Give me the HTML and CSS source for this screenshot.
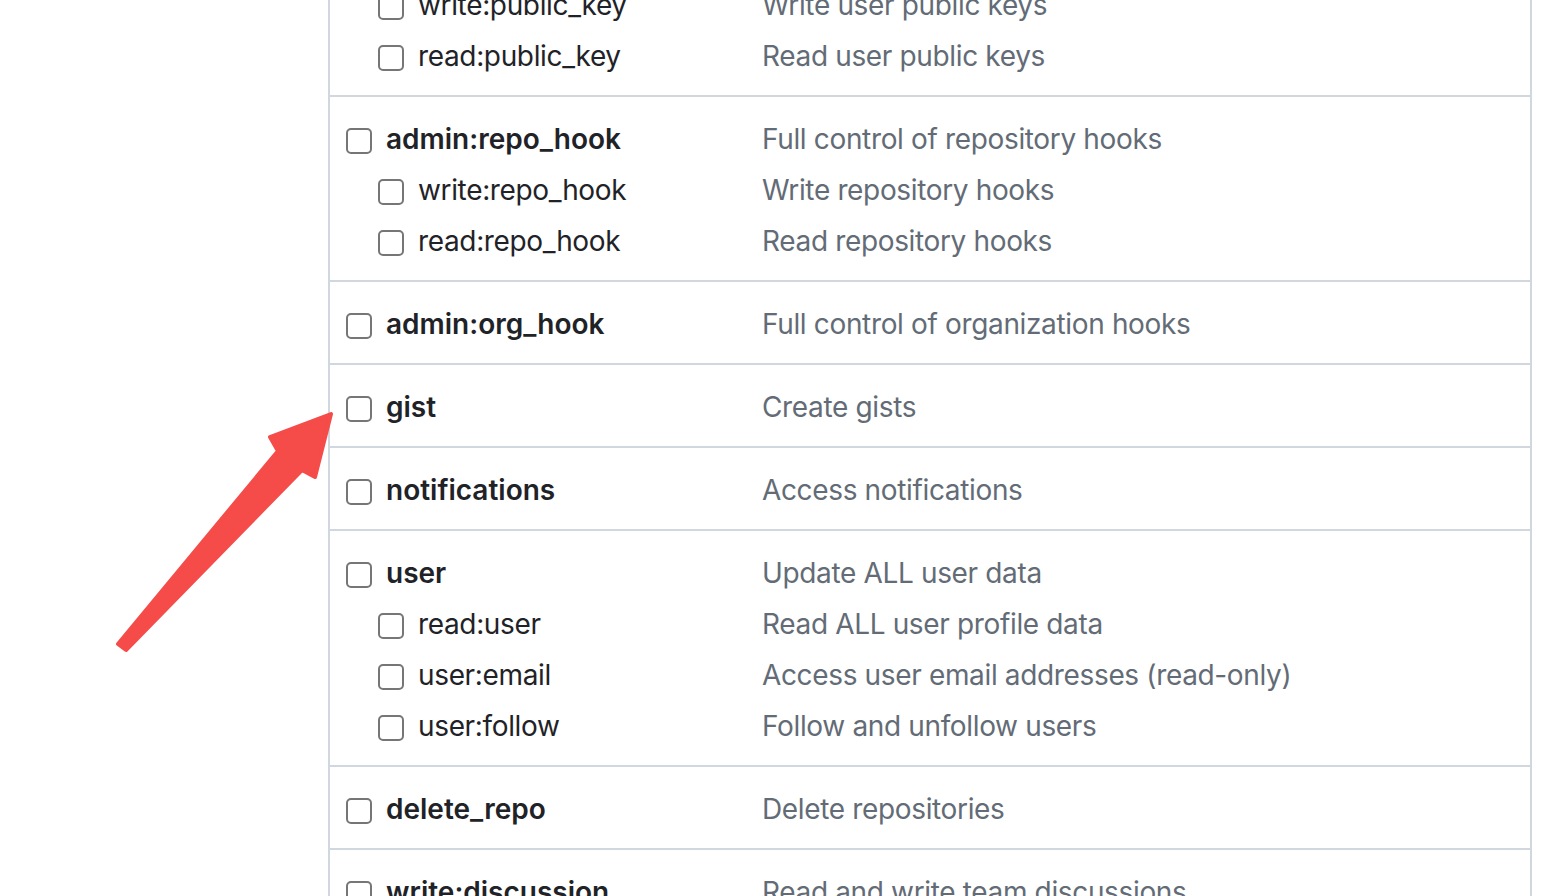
FILE: index.html
```html
<!DOCTYPE html>
<html>
<head>
<meta charset="utf-8">
<link rel="stylesheet" href="styles.css">
</head>
<body>
<div class="page">
  <div class="scopes">
    <div class="group cut">
      <div class="row sub"><span class="label"><span class="cb"></span>write:public_key</span><span class="desc">Write user public keys</span></div>
      <div class="row sub"><span class="label"><span class="cb"></span>read:public_key</span><span class="desc">Read user public keys</span></div>
    </div>
    <div class="group">
      <div class="row main"><span class="label"><span class="cb"></span>admin:repo_hook</span><span class="desc">Full control of repository hooks</span></div>
      <div class="row sub"><span class="label"><span class="cb"></span>write:repo_hook</span><span class="desc">Write repository hooks</span></div>
      <div class="row sub"><span class="label"><span class="cb"></span>read:repo_hook</span><span class="desc">Read repository hooks</span></div>
    </div>
    <div class="group">
      <div class="row main"><span class="label"><span class="cb"></span>admin:org_hook</span><span class="desc">Full control of organization hooks</span></div>
    </div>
    <div class="group">
      <div class="row main"><span class="label"><span class="cb"></span>gist</span><span class="desc">Create gists</span></div>
    </div>
    <div class="group">
      <div class="row main"><span class="label"><span class="cb"></span>notifications</span><span class="desc">Access notifications</span></div>
    </div>
    <div class="group">
      <div class="row main"><span class="label"><span class="cb"></span>user</span><span class="desc">Update ALL user data</span></div>
      <div class="row sub"><span class="label"><span class="cb"></span>read:user</span><span class="desc">Read ALL user profile data</span></div>
      <div class="row sub"><span class="label"><span class="cb"></span>user:email</span><span class="desc">Access user email addresses (read-only)</span></div>
      <div class="row sub"><span class="label"><span class="cb"></span>user:follow</span><span class="desc">Follow and unfollow users</span></div>
    </div>
    <div class="group">
      <div class="row main"><span class="label"><span class="cb"></span>delete_repo</span><span class="desc">Delete repositories</span></div>
    </div>
    <div class="group">
      <div class="row main"><span class="label"><span class="cb"></span>write:discussion</span><span class="desc">Read and write team discussions</span></div>
      <div class="row sub"><span class="label"><span class="cb"></span>read:discussion</span><span class="desc">Read team discussions</span></div>
    </div>
  </div>
  <svg class="arrow" width="1544" height="896" viewBox="0 0 1544 896">
    <polygon points="118,644 278,451 270,437 331,414 315,477 302,470 126,650" fill="#f54b49" stroke="#f54b49" stroke-width="4" stroke-linejoin="round"/>
  </svg>
</div>
</body>
</html>
```
FILE: styles.css
```css
html, body {
  margin: 0;
  padding: 0;
  background: #ffffff;
  overflow: hidden;
}
body {
  width: 1544px;
  height: 896px;
  font-family: Inter, "Noto Sans", "Liberation Sans", sans-serif;
  font-size: 28px;
  color: #1f2328;
}
.page {
  position: relative;
  width: 1544px;
  height: 896px;
  overflow: hidden;
}
.scopes {
  margin-left: 328px;
  width: 1200px;
  border-left: 2px solid #d0d7de;
  border-right: 2px solid #d0d7de;
}
.group {
  padding: 15px 0 15px 0;
  border-bottom: 2px solid #d0d7de;
}
.group.cut {
  padding-top: 0;
  margin-top: -22px;
}
.row {
  box-sizing: border-box;
  display: flex;
  align-items: center;
  height: 51px;
  padding-top: 2px;
  padding-left: 16px;
  letter-spacing: -0.35px;
}
.row.sub {
  padding-left: 48px;
}
.label {
  display: flex;
  align-items: center;
  width: 416px;
  flex-shrink: 0;
  white-space: nowrap;
}
.row.sub .label {
  width: 384px;
}
.row.main .label {
  font-weight: 600;
  letter-spacing: 0;
}
.cb {
  box-sizing: border-box;
  width: 26px;
  height: 26px;
  border: 2px solid #767676;
  border-radius: 5px;
  margin-right: 14px;
  margin-top: 4px;
  flex-shrink: 0;
  background: #fff;
}
.desc {
  color: #636c76;
  white-space: nowrap;
}
.arrow {
  position: absolute;
  left: 0;
  top: 0;
}
```
